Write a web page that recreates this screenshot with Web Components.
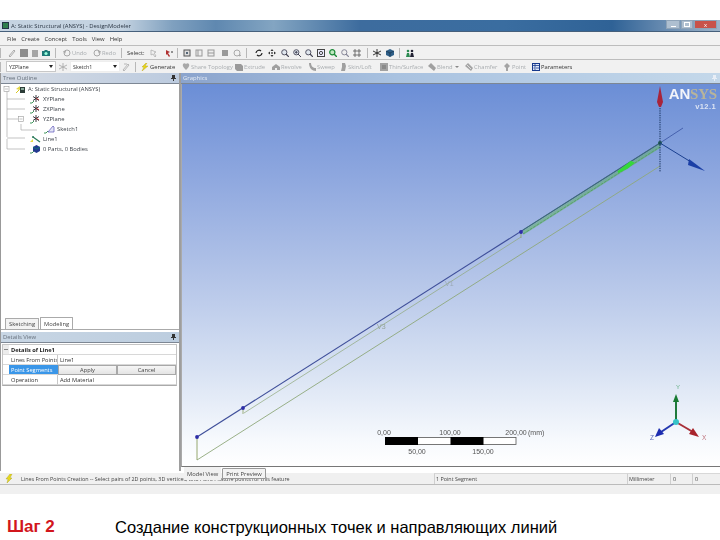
<!DOCTYPE html>
<html lang="ru"><head><meta charset="utf-8"><title>DesignModeler</title>
<style>
html,body{margin:0;padding:0;background:#fff;width:720px;height:540px;overflow:hidden}
body{font-family:"Liberation Sans",Arial,sans-serif}
</style></head><body>
<template id="t-window"><style>
:host{display:flex;flex-direction:column;width:720px;height:474px;margin-top:20px;background:#f0f0f0;filter:blur(.35px);font:5.7px "Open Sans","Liberation Sans",sans-serif;color:#333}
.main{display:flex;height:398px;align-items:stretch}
</style><slot name="top"></slot><div class="main"><slot name="left"></slot><slot name="right"></slot></div><slot name="bottom"></slot></template>

<template id="t-title"><style>
:host{display:flex;align-items:center;height:12px;background:linear-gradient(90deg,#c6d4e2 0,#c3d2e0 17%,#7fa0bf 24%,#5f88b0 30%,#83a5c2 38%,#3d6c9e 50%,#3a6da0 70%,#2f6296 85%,#668ab0 92%,#9db4ca 100%);border-bottom:1px solid #46607c;box-sizing:border-box;padding-left:2px;color:#2b3644;font-size:5.9px}
.ic{width:7px;height:7px;background:#2e7d4c;border:1px solid #234;box-sizing:border-box;margin-right:2px}
.t{flex:1}
.b{height:9px;box-sizing:border-box;border:1px solid #8ea3b8;margin-top:-2px;display:flex;align-items:center;justify-content:center;font:6px "Liberation Sans",sans-serif;color:#fff}
.min{width:14px;background:#aebfd0;margin-right:1px}.min i{width:5px;height:1px;background:#fff;margin-top:3px}
.max{width:12px;background:#aebfd0;margin-right:1px}.max i{width:4px;height:3px;border:1px solid #fff}
.cl{width:23px;background:#c8524a;margin-right:3px}
</style><span class="ic"></span><span class="t"><slot></slot></span><span class="b min"><i></i></span><span class="b max"><i></i></span><span class="b cl">x</span></template>

<template id="t-menu"><style>
:host{display:flex;align-items:center;height:13px;background:#f2f2f2;padding-left:7px;gap:5px;color:#333;font-size:5.9px}
</style><slot></slot></template>

<template id="t-toolbar"><style>
:host{display:flex;align-items:center;height:14px;box-sizing:border-box;background:#f1f1f1;border-top:1px solid #bdbdbd;padding-left:0;color:#333;font-size:5.8px;white-space:nowrap}
</style><slot></slot></template>

<template id="t-tool"><style>
:host{display:flex;align-items:center;flex:none;height:12px;box-sizing:border-box}
:host([off]){color:#a9adb0}
svg{width:8px;height:8px;flex:none;margin-right:1px}
.sep{width:1px;height:10px;background:#b8b8b8}
</style><span id="c" style="display:flex;align-items:center"></span><slot></slot></template>

<template id="t-combo"><style>
:host{display:flex;align-items:center;justify-content:space-between;flex:none;height:11px;box-sizing:border-box;background:#fff;border:1px solid #c8c8c8;padding:0 2px 0 2px;font-size:5.3px;color:#333}
i{border:2px solid transparent;border-top:3px solid #222;border-bottom:0}
</style><slot></slot><i></i></template>

<template id="t-left"><style>
:host{display:flex;flex-direction:column;width:181px;flex:none;box-sizing:border-box;background:#fff;border-left:1px solid #999;border-right:2px solid #9e9e9e;height:398px}
.grow{height:234px;position:relative}
</style><slot></slot></template>

<template id="t-head"><style>
:host{display:flex;align-items:center;height:11px;box-sizing:border-box;padding:0 3px 0 2px;background:var(--hb,linear-gradient(90deg,#d5dbe4,#bccbdf));border-bottom:1px solid #7d8794;color:var(--hc,#66707c);font-size:5.9px;flex:none}
span{flex:1}
svg{width:5px;height:6px}
</style><span><slot></slot></span><svg viewBox="0 0 5 6"><path d="M1 0h3v3h1v1H3v2H2V4H0V3h1z" fill="var(--pc,#333)"/></svg></template>

<template id="t-tree"><style>
:host{display:block;position:relative;height:234px;padding:0;background:#fff;font-size:5.8px;color:#3a3f46}
svg.lines{position:absolute;left:0;top:0;width:70px;height:80px}
</style><svg class="lines" viewBox="0 0 70 80" fill="none" stroke="#9a9a9a" stroke-width=".6"><path d="M6 5V53M6 15H24M6 25H24M6 35H17M6 54H24M6 65H24M6 55V65M20 40V46H36"/><rect x="3" y="2.5" width="5" height="5" fill="#fff"/><path d="M4 5h3"/><rect x="17.5" y="32.5" width="5" height="5" fill="#fff"/><path d="M18.5 35h3"/></svg><slot></slot></template>

<template id="t-row"><style>
:host{display:flex;align-items:center;height:10px;position:relative;white-space:nowrap}
svg{width:11px;height:9px;flex:none;margin-right:2px}
#sp{flex:none}
</style><span id="sp"></span><svg id="i" viewBox="0 0 11 9"></svg><slot></slot></template>

<template id="t-tabs"><style>
:host{display:flex;align-items:flex-end;height:12px;flex:none;padding-left:var(--pl,4px);border-bottom:var(--bb,1px solid #aaa);box-sizing:border-box;font-size:5.8px;color:#444;gap:1px;position:relative}
</style><slot></slot></template>

<template id="t-tab"><style>
:host{display:flex;align-items:center;justify-content:center;height:var(--h,11px);box-sizing:border-box;border:1px solid #aaa;border-bottom:0;background:#f3f3f3;padding:0 3px;flex:none;border-radius:1px 1px 0 0}
:host([active]){background:#fff;height:12px}
</style><slot></slot></template>

<template id="t-details"><style>
:host{display:block;margin:1px 2px 0 1px;font-size:5.7px;color:#333;background:#fff}
.g{display:grid;grid-template-columns:6px 49px 1fr 1fr;grid-auto-rows:10px;border:1px solid #c4c4c4;border-bottom:1px solid #aaa}
.g>div{display:flex;align-items:center;box-sizing:border-box;padding-left:2px;border-bottom:1px solid #d8d8d8;white-space:nowrap;overflow:hidden}
.h{grid-column:2/5;font-weight:700;color:#222;border-bottom:1px solid #cfcfcf}
.g>.box{padding:0;background:#ececec;justify-content:center;align-items:center;border-bottom:1px solid #ddd}
.box i{display:block;width:4px;height:1px;background:#888}
.k{border-right:1px solid #c8c8c8}
.v{grid-column:3/5}
.sel{background:#3a96e8;color:#fff;border:0}
.g>.btn{padding:0;justify-content:center;background:linear-gradient(#f6f6f6,#e4e4e4);border:1px solid #a8a8a8;color:#444}
.e{background:#fff}
</style><div class="g">
<div class="box"><i></i></div><div class="h">Details of Line1</div>
<div class="e"></div><div class="k">Lines From Points</div><div class="v">Line1</div>
<div class="e"></div><div class="k sel">Point Segments</div><div class="btn">Apply</div><div class="btn">Cancel</div>
<div class="e"></div><div class="k">Operation</div><div class="v">Add Material</div>
</div></template>

<template id="t-graphics"><style>
:host{display:flex;flex-direction:column;flex:1;min-width:0;height:398px;background:#fff}
.view{position:relative;height:383px;flex:none;background:linear-gradient(#6b8ed6 0,#8ba5de 22%,#b3c4e8 50%,#d8e2f3 75%,#f6f9fd 93%,#fff 100%);border-left:1px solid #aaa;box-sizing:border-box;overflow:hidden;border-bottom:1px solid #777}
svg{position:absolute;left:-181px;top:-84px;width:720px;height:540px}
text{font-family:"Liberation Sans",Arial,sans-serif}
</style><slot name="head"></slot><div class="view">
<svg viewBox="0 0 720 540" fill="none">
<!-- model -->
<path d="M196 460 659 166" stroke="#8fa87a" stroke-width=".9"/>
<path d="M196 437V460" stroke="#8b9e60" stroke-width=".9"/>
<path d="M242 408V414" stroke="#8b9e60" stroke-width=".8"/>
<path d="M243 413 520 237" stroke="#8fa87a" stroke-width=".7"/>
<path d="M520 232V238" stroke="#8b9e60" stroke-width=".7"/>
<path d="M196 437 659 143" stroke="#3f4f9a" stroke-width="1.1"/>
<path d="M659 143 682 128" stroke="#3f5aa8" stroke-width=".9"/>
<path d="M522 233 659 146" stroke="#5fae66" stroke-width="3.6" opacity=".55"/>
<path d="M522 234 659 147" stroke="#4f9e5a" stroke-width=".8" stroke-dasharray="3 1"/>
<path d="M522 230 659 143" stroke="#3c7f60" stroke-width=".7"/>
<path d="M617 172 630 162 L632 163 626 168Z" fill="#35d83a" stroke="#35d83a" stroke-width="2"/>
<g fill="#2d2da8"><circle cx="196" cy="437" r="1.9"/><circle cx="242" cy="408" r="1.9"/><circle cx="520" cy="232" r="1.9"/></g>
<circle cx="659" cy="143" r="2" fill="#1f5a52"/>
<text x="444" y="286" font-size="7" fill="#9aa8b4">V1</text>
<text x="376" y="329" font-size="7" fill="#94a49a">V3</text>
<!-- global axes -->
<path d="M659 108V172" stroke="#14305a" stroke-width="1" stroke-dasharray="1.3 1"/>
<path d="M659 86 662 102 660 107H658L656 102Z" fill="#a8243a"/>
<path d="M659 143 690 162" stroke="#1a3f8f" stroke-width="1"/>
<path d="M688 159 704 171 687 165Z" fill="#1b3fa6"/>
<!-- triad -->
<path d="M675 422V398" stroke="#1f7a3c" stroke-width="2"/><path d="M675 394 678 402H672Z" fill="#187a32"/>
<path d="M675 422 692 432" stroke="#a83038" stroke-width="2"/><path d="M698 437 688 434 692 428Z" fill="#a8242c"/>
<path d="M675 422 660 432" stroke="#2438b0" stroke-width="2"/><path d="M654 437 658 428 663 434Z" fill="#1c2cb0"/>
<circle cx="675" cy="422" r="3" fill="#36c4c8"/>
<text x="675" y="389" font-size="6" fill="#68b088">Y</text>
<text x="701" y="440" font-size="6.5" fill="#c07880">X</text>
<text x="649" y="440" font-size="6.5" fill="#5a68b8">Z</text>
<!-- scale -->
<rect x="384.5" y="437.5" width="130.5" height="7" fill="#fff" stroke="#555" stroke-width=".8"/>
<rect x="384" y="437" width="33" height="8" fill="#000"/><rect x="449.5" y="437" width="33" height="8" fill="#000"/>
<g font-size="7" fill="#555" text-anchor="middle"><text x="383" y="435">0,00</text><text x="449" y="435">100,00</text><text x="515" y="435">200,00</text><text x="416" y="454">50,00</text><text x="482" y="454">150,00</text></g>
<text x="527" y="435" font-size="7" fill="#555">(mm)</text>
</svg>
<ansys-logo></ansys-logo>
</div><slot name="tabs"></slot></template>

<template id="t-logo"><style>
:host{position:absolute;right:3px;top:2px;display:block;text-align:right;line-height:1;font-family:"Liberation Sans",Arial,sans-serif}
.a{font-size:15px;font-weight:700;letter-spacing:-.2px;color:#f2f4fa;line-height:15px}
.s{color:#b8b49a;font-family:"Liberation Serif",serif}
.v{font-size:7.5px;font-weight:700;color:#dce4f4;margin-top:1px;margin-right:1px;letter-spacing:.4px}
</style><div class="a">AN<span class="s">SYS</span></div><div class="v">v12.1</div></template>

<template id="t-status"><style>
:host{display:flex;height:14px;flex:none;margin-top:0;background:#f0f0f0;border-top:2px solid #fff;border-bottom:1px solid #bbb;box-sizing:border-box;font-size:5.4px;color:#444;white-space:nowrap}
</style><slot></slot></template>

<template id="t-cell"><style>
:host{display:flex;align-items:center;flex:none;box-sizing:border-box;border-left:1px solid #cfcfcf;border-top:1px solid #d8d8d8;padding-left:1px;height:100%}
</style><slot></slot></template>

<template id="t-caption"><style>
:host{display:flex;align-items:center;height:20px;margin-top:23px;padding-left:7px;font:16.5px "Liberation Sans",Arial,sans-serif;color:#000}
.s{width:108px;color:#d2161c;font-weight:700;font-size:17px;flex:none}
</style><span class="s"><slot name="step"></slot></span><slot></slot></template>

<app-window>
<title-bar slot="top">A: Static Structural (ANSYS) - DesignModeler</title-bar>
<menu-bar slot="top"><span>File</span><span>Create</span><span>Concept</span><span>Tools</span><span>View</span><span>Help</span></menu-bar>
<tool-bar slot="top" id="tb1"></tool-bar>
<tool-bar slot="top" id="tb2"></tool-bar>
<left-pane slot="left">
  <panel-head>Tree Outline</panel-head>
  <tree-view>
    <tree-row pad="14" icon="root">A: Static Structural (ANSYS)</tree-row>
    <tree-row pad="29" icon="plane">XYPlane</tree-row>
    <tree-row pad="29" icon="plane">ZXPlane</tree-row>
    <tree-row pad="29" icon="plane">YZPlane</tree-row>
    <tree-row pad="43" icon="sketch">Sketch1</tree-row>
    <tree-row pad="29" icon="line">Line1</tree-row>
    <tree-row pad="29" icon="body">0 Parts, 0 Bodies</tree-row>
  </tree-view>
  <tab-strip style="--pl:4px"><tab-item>Sketching</tab-item><tab-item active>Modeling</tab-item></tab-strip>
  <panel-head style="margin-top:2px;--hb:linear-gradient(90deg,#c8d6e4,#bccddf)">Details View</panel-head>
  <details-view></details-view>
</left-pane>
<graphics-pane slot="right">
  <panel-head slot="head" style="--hb:linear-gradient(90deg,#8ba4cd,#a9c2e0 40%,#c4d8ea);--hc:#e8eef6;--pc:#e8eef6;margin-left:0">Graphics</panel-head>
  <tab-strip slot="tabs" style="--pl:3px;--bb:0;height:15px;align-items:flex-start"><tab-item active style="height:13px;border:0;background:#f0f0f0">Model View</tab-item><tab-item style="height:11px;border:1px solid #999;margin-top:1px">Print Preview</tab-item></tab-strip>
</graphics-pane>
<status-bar slot="bottom">
  <status-cell style="width:434px;border:0;padding-left:5px"><svg width="8" height="10" viewBox="0 0 8 10" style="margin-right:8px"><path d="M5 0 1 5h2L2 9l5-5H5l2-4z" fill="#e6d820" stroke="#a8a020" stroke-width=".4"/></svg>Lines From Points Creation -- Select pairs of 2D points, 3D vertices, and Point Feature points for this feature</status-cell>
  <status-cell style="width:193px">1 Point Segment</status-cell>
  <status-cell style="width:43px">Millimeter</status-cell>
  <status-cell style="width:22px;padding-left:2px">0</status-cell>
  <status-cell style="width:28px;padding-left:2px">0</status-cell>
</status-bar>
</app-window>
<slide-caption><span slot="step">Шаг 2</span>Создание конструкционных точек и направляющих линий</slide-caption>

<script>
const ICONS={
 doc:'<path d="M1 7 6 1l1 1-5 6z" fill="none" stroke="#aaa"/>',
 gray:'<rect x="0" y="0" width="8" height="8" fill="#8e8e8e"/>',
 gray2:'<rect x="1" y="1" width="6" height="7" fill="#a6a6a6"/>',
 cam:'<path d="M0 2h2l1-1h2l1 1h2v5H0z" fill="#1e7a78"/><circle cx="4" cy="4.5" r="1.6" fill="#9fd"/>',
 undo:'<circle cx="4" cy="4" r="3" fill="none" stroke="#a8a8a8"/><path d="M0 2l3 0-1 3z" fill="#a8a8a8"/>',
 redo:'<circle cx="4" cy="4" r="3" fill="none" stroke="#a8a8a8"/><path d="M8 2l-3 0 1 3z" fill="#a8a8a8"/>',
 sel1:'<path d="M1 1l5 2-2 1 2 3-1 1-2-3-2 1z" fill="none" stroke="#b0b0b0" stroke-width=".8"/>',
 sel2:'<path d="M1 1l4 2-2 1 2 3-1 1-2-3-1 1z" fill="#b03030"/><path d="M6 3h2" stroke="#333"/>',
 cubeS:'<rect x="1" y="1" width="6" height="6" fill="#ddd" stroke="#555"/><path d="M3 3h2v2H3z" fill="#567"/>',
 cube1:'<rect x="1" y="1" width="6" height="6" fill="#eee" stroke="#999"/><path d="M3 1v6" stroke="#999"/>',
 cube2:'<rect x="1" y="1" width="6" height="6" fill="#eee" stroke="#999"/><path d="M1 4h6" stroke="#999"/>',
 cube3:'<rect x="1" y="1" width="6" height="6" fill="#999"/>',
 ball:'<circle cx="4" cy="4" r="3" fill="none" stroke="#aaa"/><path d="M6 7l2-1" stroke="#999"/>',
 rot:'<path d="M1 4a3 3 0 0 1 5-2M7 4a3 3 0 0 1-5 2" fill="none" stroke="#222" stroke-width="1.2"/>',
 pan:'<path d="M4 0 5.5 2h-3zM4 8 5.5 6h-3zM0 4 2 2.500v3zM8 4 6 2.500v3z" fill="#333"/><circle cx="4" cy="4" r="1" fill="#555"/>',
 zoom:'<circle cx="3.300" cy="3.300" r="2.600" fill="#dfe6ee" stroke="#556"/><path d="M5 5l3 3" stroke="#445" stroke-width="1.200"/>',
 zoomP:'<circle cx="3.300" cy="3.300" r="2.600" fill="#dfe6ee" stroke="#556"/><path d="M5 5l3 3M2 3.300h2.600M3.300 2v2.600" stroke="#445"/>',
 zoomB:'<rect x=".5" y=".5" width="7" height="7" fill="#eef" stroke="#444"/><circle cx="4" cy="4" r="1.600" fill="none" stroke="#444"/>',
 zoomG:'<circle cx="3.300" cy="3.300" r="2.600" fill="#bfe8c0" stroke="#1c8a38" stroke-width="1.200"/><path d="M5 5l3 3" stroke="#1c8a38" stroke-width="1.400"/>',
 zoomL:'<circle cx="3.300" cy="3.300" r="2.600" fill="#eee" stroke="#889"/><path d="M5 5l3 3" stroke="#889" stroke-width="1.200"/>',
 grid:'<path d="M1 1h2v2H1zM5 1h2v2H5zM1 5h2v2H1zM5 5h2v2H5z" fill="none" stroke="#555" stroke-width=".8"/>',
 star:'<path d="M4 0v8M0 2l8 4M8 2 0 6" stroke="#222" stroke-width=".9"/>',
 cubeB:'<path d="M4 0 8 2v4L4 8 0 6V2z" fill="#2f5f88"/><path d="M4 4 8 2M4 4 0 2M4 4v4" stroke="#123" stroke-width=".5"/>',
 ppl:'<circle cx="2" cy="2" r="1.300" fill="#2a8a50"/><path d="M0 8 1 4h2l1 4z" fill="#2a8a50"/><circle cx="6" cy="2" r="1.300" fill="#223"/><path d="M4 8 5 4h2l1 4z" fill="#223"/>',
 axis:'<path d="M4 0v8M0 2l8 4M8 2 0 6" stroke="#aaa" stroke-width=".9"/>',
 sk:'<path d="M1 7 6 1l1 1-5 6zM2 1h3" fill="none" stroke="#aaa" stroke-width=".8"/>',
 bolt:'<path d="M5 0 1 4h2L1 8l6-5H4l2-3z" fill="#e8d818" stroke="#b8a010" stroke-width=".4"/>',
 heart:'<path d="M1 1c1-1 2-1 3 0 1-1 2-1 3 0 1 2-1 4-3 6C2 5 0 3 1 1z" fill="#a8a8a8"/>',
 ext:'<path d="M0 1h6l2 2v5H2L0 6z" fill="#9a9a9a"/>',
 rev:'<path d="M4 1 8 4v3H0V4z" fill="#a0a0a0"/><path d="M3 7V5h2v2z" fill="#eee"/>',
 swp:'<path d="M1 0h2c0 3 2 5 5 5v3C4 8 1 5 1 0z" fill="#a0a0a0"/>',
 skin:'<path d="M3 0h3l1 3-1 5H2l1-4z" fill="#a0a0a0"/>',
 thin:'<rect x="0" y="0" width="8" height="8" fill="#a2a2a2"/><path d="M2 2h4v4H2z" fill="#8a8a8a"/>',
 blend:'<path d="M0 3 3 0l5 5-2 3z" fill="#a0a0a0"/>',
 cham:'<path d="M0 3 3 0l5 5-2 3z" fill="#a4a4a4"/><path d="M2 2l4 4" stroke="#ddd"/>',
 pt:'<path d="M4 0 7 3 5 5v3H3V5L1 3z" fill="#a4a4a4"/>',
 param:'<rect x=".5" y=".5" width="7" height="7" fill="#dfe8f8" stroke="#16388c"/><path d="M0 2.500h8M3 .5v7M1.500 5h1M4 5h3" stroke="#16388c" stroke-width=".8"/>',
 root:'<path d="M1 8 4 5" stroke="#d8c820"/><path d="M1 4l4-3v4z" fill="#e2d64a"/><path d="M5 2h5v6H5z" fill="#2d3d38"/><path d="M6 3h3v2H6z" fill="#8a9"/>',
 plane:'<path d="M0 8l2 0 2-2" fill="none" stroke="#2a8a4a" stroke-width=".9"/><path d="M6 0v7M3 1.500l6 4M9 1.500l-6 4" stroke="#26262e" stroke-width=".9"/><path d="M6 3l3 2" stroke="#b03030"/>',
 sketch:'<path d="M0 8l2 0 2-2" fill="none" stroke="#2a8a4a" stroke-width=".9"/><path d="M4 7 9 1l1 1v5z" fill="#e4e6f6" stroke="#5a50b8" stroke-width=".7"/>',
 line:'<path d="M0 7l3-3v3z" fill="#e8dc40"/><path d="M3 2l7 5" stroke="#2a7a58" stroke-width="1.200"/><circle cx="3" cy="2" r="1" fill="#2a7a58"/>',
 body:'<path d="M0 8l2 0 2-2" fill="none" stroke="#2a8a4a" stroke-width=".9"/><path d="M6.500 0 10 2v4L6.500 8 3 6V2z" fill="#243a90"/><path d="M3 2l3.500 2L10 2" stroke="#0e7a6e" stroke-width=".9" fill="none"/>'
};
const def=(n,id,init)=>customElements.define(n,class extends HTMLElement{
  constructor(){super();this.attachShadow({mode:'open'}).appendChild(document.getElementById(id).content.cloneNode(true));}
  connectedCallback(){init&&init(this,this.shadowRoot);}
});
def('app-window','t-window');def('title-bar','t-title');def('menu-bar','t-menu');def('tool-bar','t-toolbar');
def('tool-combo','t-combo');def('left-pane','t-left');def('panel-head','t-head');def('tree-view','t-tree');
def('tab-strip','t-tabs');def('tab-item','t-tab');def('details-view','t-details');def('graphics-pane','t-graphics');
def('ansys-logo','t-logo');def('status-bar','t-status');def('status-cell','t-cell');def('slide-caption','t-caption');
def('tool-item','t-tool',(el,r)=>{
  const k=el.getAttribute('k'),w=el.getAttribute('w');
  if(w)el.style.width=w+'px';
  if(k==='sep'){r.getElementById('c').innerHTML='<span class="sep"></span>';}
  else if(k){r.getElementById('c').innerHTML='<svg viewBox="0 0 8 8">'+ICONS[k]+'</svg>';}
  if(el.hasAttribute('arrow')){el.insertAdjacentHTML('beforeend','<span style="display:inline-block;margin-left:2px;border:2px solid transparent;border-top:2.500px solid #888;border-bottom:0"></span>');}
});
def('tree-row','t-row',(el,r)=>{
  r.getElementById('sp').style.width=el.getAttribute('pad')+'px';
  r.getElementById('i').innerHTML=ICONS[el.getAttribute('icon')];
});
const tb=(id,items)=>{document.getElementById(id).innerHTML=items.map(([w,k,t,o])=>
  `<tool-item w="${w}"${k?` k="${k}"`:''}${o&1?' off':''}${o&2?' arrow':''}>${t||''}</tool-item>`).join('');};
tb('tb1',[[3,'sep'],[5],[12,'doc'],[11,'gray'],[11,'gray2'],[13,'cam'],[3,'sep'],[5],[30,'undo','Undo',1],[28,'redo','Redo',1],[3,'sep'],[3],[23,null,'Select:'],[15,'sel1'],[12,'sel2'],[3,'sep'],[3],[12,'cubeS'],[12,'cube1'],[14,'cube2'],[12,'cube3'],[13,'ball'],[3,'sep'],[6],[13,'rot'],[13,'pan'],[12,'zoom'],[12,'zoomP'],[12,'zoom'],[12,'zoomB'],[12,'zoomG'],[12,'zoomL'],[14,'grid'],[3,'sep'],[3],[13,'star'],[13,'cubeB'],[3,'sep'],[4],[12,'ppl']]);
tb('tb2',[[3,'sep'],[3]]);
const t2=document.getElementById('tb2');
t2.insertAdjacentHTML('beforeend','<tool-combo style="width:50px">YZPlane</tool-combo><tool-item w="14" k="axis" style="padding-left:3px" off></tool-item><tool-combo style="width:50px;border-color:#eee">Sketch1</tool-combo><tool-item w="11" k="sk" style="padding-left:2px" off></tool-item><tool-item w="4"></tool-item><tool-item k="sep" w="6"></tool-item>');
[[41,'bolt','Generate',0],[53,'heart','Share Topology',1],[37,'ext','Extrude',1],[36,'rev','Revolve',1],[31,'swp','Sweep',1],[41,'skin','Skin/Loft',1],[48,'thin','Thin/Surface',1],[37,'blend','Blend',3],[38,'cham','Chamfer',1],[29,'pt','Point',1],[50,'param','Parameters',0]].forEach(([w,k,t,o])=>{
  t2.insertAdjacentHTML('beforeend',`<tool-item w="${w}" k="${k}"${o&1?' off':''}${o&2?' arrow':''}>${t}</tool-item>`);
});
</script>
</body></html>
